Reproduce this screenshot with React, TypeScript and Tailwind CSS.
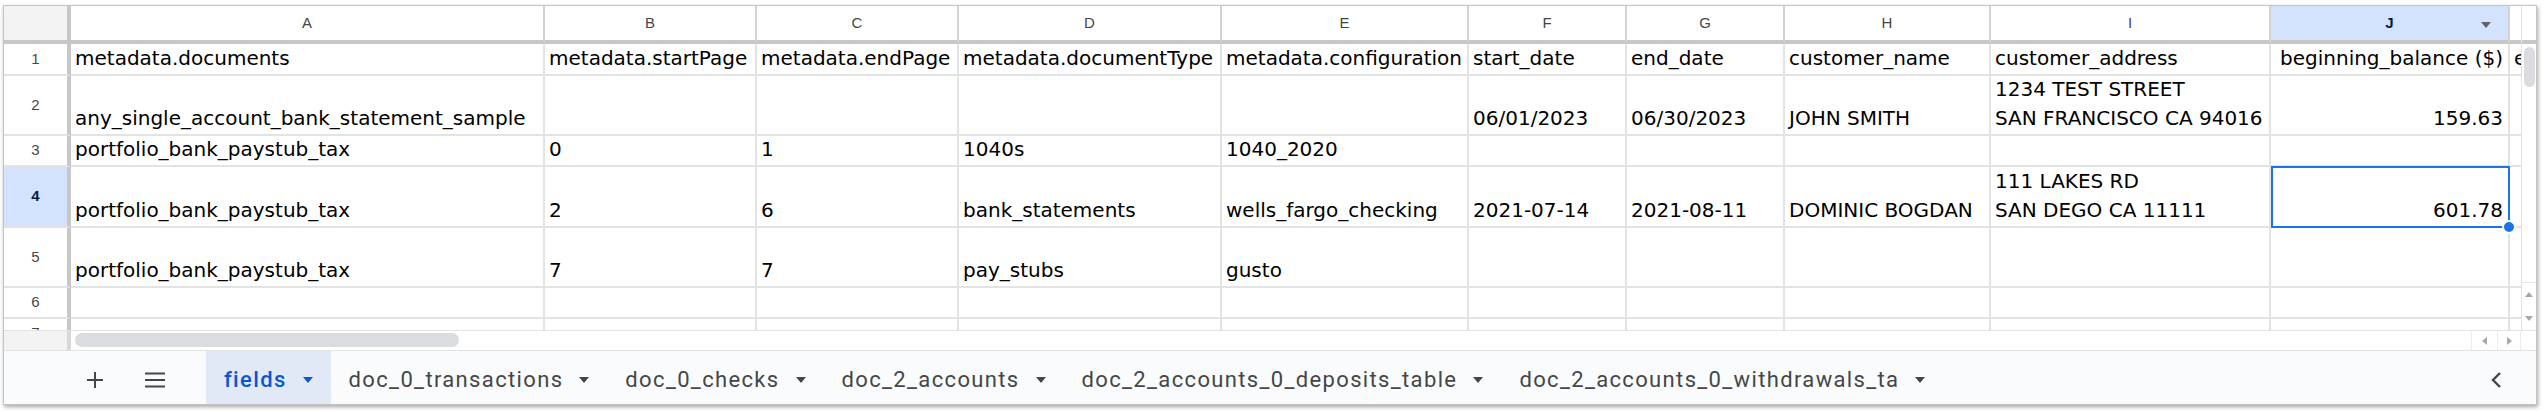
import React from 'react';

type Col = { key: string; w: string; last?: boolean };

const COLS: Col[] = [
  { key: 'A', w: 'w-[474px]' },
  { key: 'B', w: 'w-[212px]' },
  { key: 'C', w: 'w-[202px]' },
  { key: 'D', w: 'w-[263px]' },
  { key: 'E', w: 'w-[247px]' },
  { key: 'F', w: 'w-[158px]' },
  { key: 'G', w: 'w-[158px]' },
  { key: 'H', w: 'w-[206px]' },
  { key: 'I', w: 'w-[280px]' },
  { key: 'J', w: 'w-[239px]' },
  { key: '', w: 'w-[11px]', last: true },
];

type RowDef = { n: string; h: string; vals: string[]; sel?: boolean };

const ROWS: RowDef[] = [
  {
    n: '1',
    h: 'h-[32px]',
    vals: [
      'metadata.documents',
      'metadata.startPage',
      'metadata.endPage',
      'metadata.documentType',
      'metadata.configuration',
      'start_date',
      'end_date',
      'customer_name',
      'customer_address',
      'beginning_balance ($)',
      'ending_balance ($)',
    ],
  },
  {
    n: '2',
    h: 'h-[60px]',
    vals: [
      'any_single_account_bank_statement_sample',
      '',
      '',
      '',
      '',
      '06/01/2023',
      '06/30/2023',
      'JOHN SMITH',
      '1234 TEST STREET\nSAN FRANCISCO CA 94016',
      '159.63',
      '',
    ],
  },
  {
    n: '3',
    h: 'h-[31px]',
    vals: ['portfolio_bank_paystub_tax', '0', '1', '1040s', '1040_2020', '', '', '', '', '', ''],
  },
  {
    n: '4',
    h: 'h-[61px]',
    sel: true,
    vals: [
      'portfolio_bank_paystub_tax',
      '2',
      '6',
      'bank_statements',
      'wells_fargo_checking',
      '2021-07-14',
      '2021-08-11',
      'DOMINIC BOGDAN',
      '111 LAKES RD\nSAN DEGO CA 11111',
      '601.78',
      '',
    ],
  },
  {
    n: '5',
    h: 'h-[60px]',
    vals: ['portfolio_bank_paystub_tax', '7', '7', 'pay_stubs', 'gusto', '', '', '', '', '', ''],
  },
  { n: '6', h: 'h-[31px]', vals: ['', '', '', '', '', '', '', '', '', '', ''] },
  { n: '7', h: 'h-[31px]', vals: ['', '', '', '', '', '', '', '', '', '', ''] },
];

const TABS = [
  'fields',
  'doc_0_transactions',
  'doc_0_checks',
  'doc_2_accounts',
  'doc_2_accounts_0_deposits_table',
  'doc_2_accounts_0_withdrawals_ta',
];

function Tri({ color = '#444746' }: { color?: string }) {
  return (
    <svg width="10" height="6" viewBox="0 0 10 6" className="shrink-0">
      <path d="M0 0H10L5 6Z" fill={color} />
    </svg>
  );
}

function HeaderRow() {
  return (
    <div className="flex h-[38px] shrink-0">
      <div className="w-[67px] shrink-0 bg-[#f3f3f3] border-r-4 border-b-4 border-[#c7c7c7]" />
      {COLS.map((c, i) => {
        const isJ = c.key === 'J';
        return (
          <div
            key={i}
            className={`${c.w} shrink-0 relative flex items-center justify-center border-b-4 border-b-[#c7c7c7] ${
              c.last ? '' : 'border-r-2 border-r-[#d3d3d3]'
            } ${isJ ? 'bg-[#d3e3fd] font-bold text-[#041e49]' : 'bg-white text-[#444746]'} text-[15px] [font-family:'Liberation_Sans',Arial,sans-serif]`}
          >
            {c.key}
            {isJ && (
              <div className="absolute right-[17px] top-[16px]">
                <Tri color="#5f6368" />
              </div>
            )}
          </div>
        );
      })}
    </div>
  );
}

function DataRow({ r }: { r: RowDef }) {
  return (
    <div className={`flex ${r.h} shrink-0`}>
      <div
        className={`w-[67px] shrink-0 flex items-center justify-center border-r-4 border-r-[#c7c7c7] border-b-2 border-b-[#e2e3e3] text-[15px] [font-family:'Liberation_Sans',Arial,sans-serif] ${
          r.sel ? 'bg-[#d3e3fd] font-bold text-[#041e49]' : 'bg-white text-[#444746]'
        }`}
      >
        {r.n}
      </div>
      {COLS.map((c, i) => {
        const v = r.vals[i] || '';
        const right = c.key === 'J';
        const selected = r.sel && c.key === 'J';
        const lines = v ? v.split('\n') : [];
        return (
          <div
            key={i}
            className={`${c.w} shrink-0 relative border-b-2 border-b-[#e2e3e3] ${c.last ? '' : 'border-r-2 border-r-[#e2e3e3]'}`}
          >
            <div
              className={`h-full overflow-hidden flex flex-col justify-end pb-px text-black text-[20px] [font-family:'DejaVu_Sans',sans-serif] ${
                right ? 'items-end pr-[5px]' : 'items-start pl-[4px]'
              }`}
            >
              {lines.map((l, k) => (
                <div key={k} className="whitespace-nowrap leading-[29px]">
                  {l}
                </div>
              ))}
            </div>
            {selected && (
              <div className="absolute left-0 top-[-1px] right-[-2px] bottom-[-2px] border-2 border-[#1a73e8] z-10 pointer-events-none">
                <div className="absolute right-[-8px] bottom-[-8px] w-[14px] h-[14px] rounded-full bg-[#1a73e8] border-2 border-white" />
              </div>
            )}
          </div>
        );
      })}
    </div>
  );
}

export default function App() {
  return (
    <div className="w-[2544px] h-[412px] bg-white overflow-hidden">
      <div className="ml-[3px] mt-[5px] w-[2534px] h-[400px] border border-[#c4c4c4] shadow-[1px_2px_4px_rgba(0,0,0,0.35)] bg-white flex flex-col overflow-hidden">
        {/* grid + vertical scrollbar */}
        <div className="flex h-[324px] shrink-0">
          <div className="w-[2517px] shrink-0 flex flex-col">
            <HeaderRow />
            <div className="h-[286px] overflow-hidden flex flex-col">
              {ROWS.map((r) => (
                <DataRow key={r.n} r={r} />
              ))}
            </div>
          </div>
          <div className="w-[15px] shrink-0 border-l border-[#e2e3e3] bg-white flex flex-col items-center">
            <div className="h-[38px] w-full shrink-0 border-b-4 border-[#c7c7c7]" />
            <div className="mt-[3px] w-[11px] h-[40px] rounded-full bg-[#dadce0]" />
            <div className="mt-auto w-full h-[24px] flex items-center justify-center border-t border-[#e8e8e8]">
              <svg width="8" height="5" viewBox="0 0 8 5">
                <path d="M0 5H8L4 0Z" fill="#a8a8a8" />
              </svg>
            </div>
            <div className="w-full h-[24px] flex items-center justify-center">
              <svg width="8" height="5" viewBox="0 0 8 5">
                <path d="M0 0H8L4 5Z" fill="#a8a8a8" />
              </svg>
            </div>
          </div>
        </div>

        {/* horizontal scrollbar */}
        <div className="h-[20px] shrink-0 flex border-t border-[#e2e3e3]">
          <div className="w-[67px] shrink-0 bg-[#f3f3f3] border-r-4 border-[#d8d8d8]" />
          <div className="ml-[4px] mt-[2px] w-[384px] h-[14px] rounded-full bg-[#dadce0]" />
          <div className="ml-auto flex mr-[15px]">
            <div className="w-[26px] h-[19px] flex items-center justify-center border-l border-[#ececec]">
              <svg width="5" height="8" viewBox="0 0 5 8">
                <path d="M5 0V8L0 4Z" fill="#a8a8a8" />
              </svg>
            </div>
            <div className="w-[24px] h-[19px] flex items-center justify-center border-l border-r border-[#ececec]">
              <svg width="5" height="8" viewBox="0 0 5 8">
                <path d="M0 0V8L5 4Z" fill="#a8a8a8" />
              </svg>
            </div>
          </div>
        </div>

        {/* tab bar */}
        <div className="flex-1 flex items-stretch border-t border-[#e1e3e1] bg-[#f9fbfd] [font-family:Roboto,sans-serif]">
          <div className="flex items-center pl-[79px] pt-[4px]">
            <svg width="24" height="24" viewBox="0 0 24 24">
              <path d="M12 4V20M4 12H20" stroke="#444746" strokeWidth="2" fill="none" />
            </svg>
          </div>
          <div className="flex items-center ml-[36px] pt-[4px]">
            <svg width="24" height="24" viewBox="0 0 24 24">
              <path d="M2 5.5H22M2 12H22M2 18.5H22" stroke="#444746" strokeWidth="2" fill="none" />
            </svg>
          </div>
          <div className="flex ml-[39px]">
            {TABS.map((t, i) => {
              const active = i === 0;
              return (
                <div
                  key={t}
                  className={`flex items-center h-full px-[18px] gap-[16px] pt-[4px] ${active ? 'bg-[#e1e9f7]' : ''}`}
                >
                  <span
                    className={`text-[22px] tracking-[1.35px] whitespace-nowrap ${
                      active ? 'text-[#0b57d0] font-medium' : 'text-[#444746]'
                    }`}
                  >
                    {t}
                  </span>
                  <Tri color={active ? '#0b57d0' : '#444746'} />
                </div>
              );
            })}
          </div>
          <div className="ml-auto mr-[27px] flex items-center pt-[4px]">
            <svg width="24" height="24" viewBox="0 0 24 24">
              <path d="M15 5L8 12L15 19" stroke="#444746" strokeWidth="2.4" fill="none" />
            </svg>
          </div>
        </div>
      </div>
    </div>
  );
}
